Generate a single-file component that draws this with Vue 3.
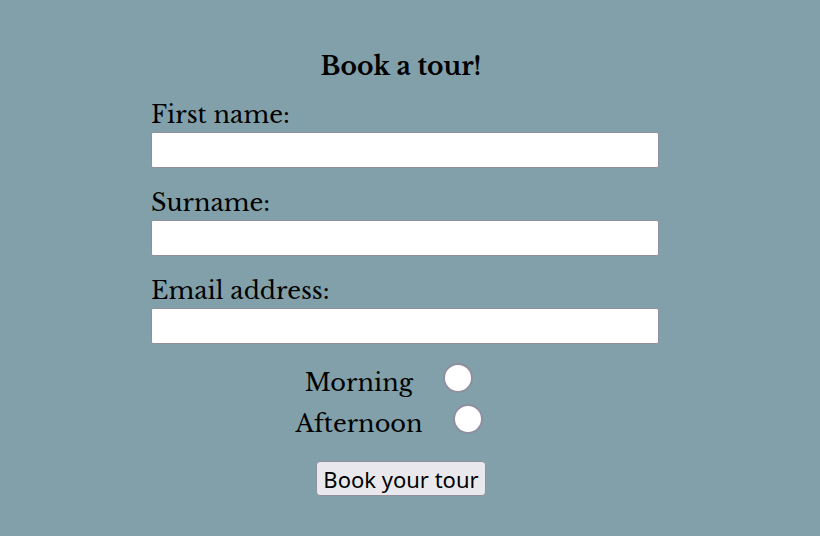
<script setup>
import { reactive } from 'vue'

const fields = [
  { id: 'first-name', label: 'First name:', type: 'text' },
  { id: 'surname', label: 'Surname:', type: 'text' },
  { id: 'email', label: 'Email address:', type: 'email' },
]
const slots = [
  { id: 'morning', label: 'Morning' },
  { id: 'afternoon', label: 'Afternoon' },
]
const form = reactive({ slot: '' })
</script>

<template>
  <main class="page">
    <form class="tour" @submit.prevent>
      <h1 class="title">Book a tour!</h1>
      <div v-for="field in fields" :key="field.id" class="field">
        <label :for="field.id">{{ field.label }}</label>
        <input :id="field.id" v-model="form[field.id]" class="box" :type="field.type" />
      </div>
      <div class="slots">
        <div v-for="slot in slots" :key="slot.id" class="slot">
          <label class="slot-label" :for="slot.id">{{ slot.label }}</label>
          <input :id="slot.id" v-model="form.slot" class="dot" type="radio" name="slot" :value="slot.id" />
        </div>
      </div>
      <button class="submit" type="submit">Book your tour</button>
    </form>
  </main>
</template>

<style>
body {
  background: #82a0aa;
}
</style>

<style scoped>
.page {
  padding: 51px 18px 40px 0;
  font-family: "Libre Baskerville", "Liberation Serif", serif;
  font-size: 24px;
  line-height: 32px;
  color: #000;
}
.tour {
  max-width: 500px;
  margin: 0 auto;
  display: flex;
  flex-direction: column;
}
.title {
  margin: 0 0 16px;
  font-size: 25px;
  line-height: 32px;
  font-weight: 700;
  text-align: center;
}
.field {
  display: flex;
  flex-direction: column;
  gap: 1px;
  margin-bottom: 19px;
}
.box {
  box-sizing: border-box;
  width: calc(100% + 8px);
  height: 36px;
  margin: 0;
  padding: 1px 4px;
  border: 1px solid #8f8f9d;
  border-radius: 2px;
  background: #fff;
  font: inherit;
}
.slots {
  display: flex;
  flex-direction: column;
  align-items: center;
  gap: 5px;
  padding-right: 24px;
}
.slot {
  display: flex;
  align-items: flex-start;
  gap: 30px;
}
.slot-label {
  padding-top: 4px;
}
.dot {
  appearance: none;
  box-sizing: border-box;
  width: 30px;
  height: 30px;
  margin: 0;
  border: 2px solid #8f8f9d;
  border-radius: 50%;
  background: #fff;
}
.submit {
  align-self: center;
  margin-top: 21px;
  height: 35px;
  padding: 0 6px;
  border: 1px solid #8f8f9d;
  border-radius: 4px;
  background: #e9e9ed;
  color: #000;
  font-family: "Noto Sans", sans-serif;
  font-size: 22px;
  line-height: 32px;
}
</style>
